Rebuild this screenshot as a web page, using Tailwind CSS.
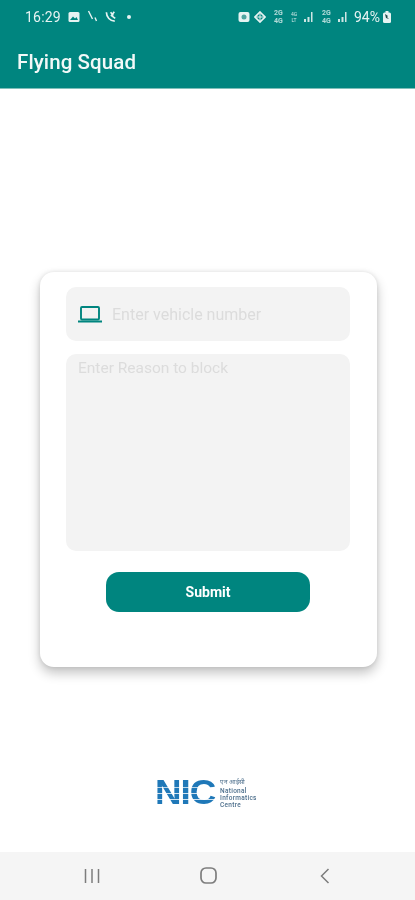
<!DOCTYPE html>
<html lang="en">
 <head>
  <meta charset="utf-8"/>
  <meta content="width=device-width, initial-scale=1.0" name="viewport"/>
  <title>Flying Squad</title>
  <script src="https://cdn.jsdelivr.net/npm/@tailwindcss/browser@4"></script>
 </head>
 <body class="bg-white font-['Roboto',sans-serif]">
  <div class="flex flex-col h-[900px] w-[415px] overflow-hidden">
   <!-- status bar + app bar -->
   <header class="h-[89px] shrink-0 bg-[#00857f] text-white border-b border-[#7fbfba]">
    <div class="flex items-center justify-between h-[32px] pl-[25px] pr-[24px] pt-[1px] blur-[0.5px]">
     <div class="flex items-center text-white/90">
      <span class="text-[14px] leading-none tracking-[0.2px]">16:29</span>
      <svg class="ml-[7px]" width="12" height="12" viewBox="0 0 12 12"><rect x="0.5" y="1" width="11" height="10" rx="1.5" fill="#e6f3f2"/><path d="M2 9l3-3.5 2 2 1.500-1.500L10 9z" fill="#00857f"/></svg>
      <svg class="ml-[7px]" width="11" height="13" viewBox="0 0 11 13" fill="none" stroke="#e6f3f2" stroke-width="1.400"><path d="M1.500 1l4 8M8 7.500l1.500 3.500"/></svg>
      <svg class="ml-[7px]" width="13" height="13" viewBox="0 0 14 13" fill="none" stroke="#e6f3f2" stroke-width="1.800"><path d="M1.500 2c0 5 4 9.500 9 9.500"/><path d="M6 2l3 3.500M10 1.500L7 5.500l4 3"/></svg>
      <span class="ml-[9px] w-[4px] h-[4px] rounded-full bg-[#e6f3f2]"></span>
     </div>
     <div class="flex items-center text-white/90">
      <svg width="12" height="12" viewBox="0 0 12 12"><rect x="0.500" y="1" width="11" height="10" rx="2" fill="#e6f3f2"/><circle cx="6" cy="6" r="2.500" fill="#4fa5a0"/></svg>
      <svg class="ml-[4px]" width="12" height="12" viewBox="0 0 12 12" fill="none" stroke="#e6f3f2" stroke-width="1.700"><path d="M6 1l5 5-5 5-5-5z"/><path d="M6 1v10M1 6h10" stroke-width="1"/></svg>
      <span class="ml-[5px] w-[15px] text-[7px] leading-[8px] font-bold text-center text-white/70">2G<br/>4G</span>
      <span class="ml-[4px] w-[8px] text-[5px] leading-[6px] text-center text-white/80">4G<br/>LT</span>
      <svg class="ml-[6px]" width="11" height="10" viewBox="0 0 11 10" fill="#cfe6e4"><rect x="0" y="7" width="2" height="3"/><rect x="3.500" y="5" width="2" height="5"/><rect x="7" y="0" width="1.500" height="10"/></svg>
      <span class="ml-[4px] w-[15px] text-[7px] leading-[8px] font-bold text-center text-white/70">2G<br/>4G</span>
      <svg class="ml-[4px]" width="11" height="10" viewBox="0 0 11 10" fill="#cfe6e4"><rect x="0" y="7" width="2" height="3"/><rect x="3.500" y="5" width="2" height="5"/><rect x="7" y="0" width="1.500" height="10"/></svg>
      <span class="ml-[5px] text-[14px] leading-none">94%</span>
      <svg class="ml-[3px]" width="8" height="12" viewBox="0 0 8 12"><rect x="0" y="1.500" width="8" height="10.500" rx="1.500" fill="#e6f3f2"/><rect x="2.500" y="0" width="3" height="2" fill="#e6f3f2"/><path d="M2 3l3 2-1 1 2 2-3-1z" fill="#1f4a48"/></svg>
     </div>
    </div>
    <h1 class="pl-[17px] mt-[7px] text-[20.5px] leading-[46px] font-medium tracking-[0.1px] text-white/95 blur-[0.3px]">Flying Squad</h1>
   </header>

   <main class="flex-1 flex flex-col items-center">
    <form class="mt-[183px] ml-[2px] w-[337px] h-[395px] bg-white rounded-[14px] pl-[26px] pr-[27px] pt-[15px] shadow-[0_6px_12px_rgba(0,0,0,0.24),0_0_4px_rgba(0,0,0,0.1)] flex flex-col">
     <div class="flex items-center h-[54px] bg-[#f3f3f3] rounded-[10px] pl-[12px]">
      <svg width="24" height="24" viewBox="0 0 24 24" fill="none" stroke="#00857f"><rect x="3" y="5" width="18" height="12.500" rx="1" stroke-width="1.900"/><path d="M0.500 19.500h23" stroke-width="2" stroke-linecap="round"/></svg>
      <span class="ml-[10px] pt-[2px] text-[16px] text-[#dcdcdc] blur-[0.5px]">Enter vehicle number</span>
     </div>
     <div class="mt-[13px] h-[197px] bg-[#f3f3f3] rounded-[10px] pl-[12px] pt-[4px]">
      <span class="text-[15.5px] leading-[20px] block text-[#dcdcdc] blur-[0.5px]">Enter Reason to block</span>
     </div>
     <button type="button" class="mt-[21px] ml-[40px] w-[204px] h-[40px] rounded-[13px] bg-[#00857f] text-white text-[14px] font-bold"><span class="blur-[0.3px] block">Submit</span></button>
    </form>

    <!-- NIC logo -->
    <div class="mt-[111px] flex items-start gap-[5px] blur-[0.6px]">
     <div class="relative h-[27px] w-[60px]">
      <span class="block font-['Liberation_Sans',sans-serif] font-bold text-[#1f78b8] text-[35px] leading-[27px] tracking-[-1px] scale-x-[1.05] origin-left">NIC</span>
      <span class="absolute left-0 right-0 top-[9px] h-[1px] bg-white/70"></span>
      <span class="absolute left-0 right-0 top-[15px] h-[1px] bg-white/80"></span>
      <span class="absolute left-0 right-0 top-[21px] h-[1px] bg-white/80"></span>
     </div>
     <div class="w-[40px] text-[#4d6f8c] text-[6.500px] leading-[7px] tracking-[0.3px] font-medium">
      <div class="mb-[2px] leading-[8px]">एनआईसी</div>
      <div>National</div>
      <div>Informatics</div>
      <div>Centre</div>
     </div>
    </div>
   </main>

   <!-- android nav bar -->
   <nav class="h-[48px] shrink-0 bg-[#f5f5f5] flex items-center justify-between pl-[84px] pr-[84px] pb-[1px] blur-[0.3px]">
    <svg width="16" height="16" viewBox="0 0 16 16" stroke="#7d7d7d" stroke-width="1.500"><path d="M1.500 1v14M8 1v14M14.500 1v14"/></svg>
    <svg class="-ml-[2px]" width="17" height="17" viewBox="0 0 17 17" fill="none" stroke="#7d7d7d" stroke-width="1.700"><rect x="1" y="1" width="15" height="15" rx="5"/></svg>
    <svg width="12" height="16" viewBox="0 0 12 16" fill="none" stroke="#7d7d7d" stroke-width="1.500"><path d="M9.500 1L2.500 8l7 7"/></svg>
   </nav>
  </div>
 </body>
</html>
